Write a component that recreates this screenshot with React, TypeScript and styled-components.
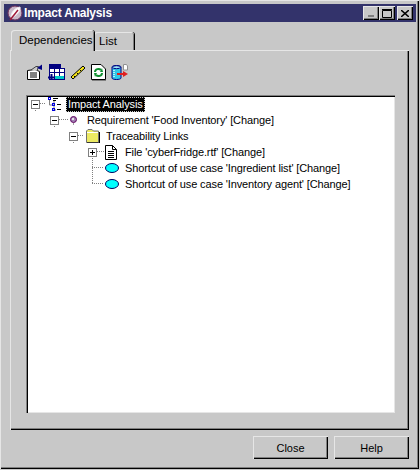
import React from 'react';
import styled, { createGlobalStyle } from 'styled-components';

const Global = createGlobalStyle`
  html, body { margin: 0; padding: 0; background: #c8c8c8; }
  * { box-sizing: border-box; }
`;

const S = {
    Window: styled.div`
    width: 419px;
    height: 469px;
    padding: 4px;
    background: #c8c8c8;
    display: flex;
    flex-direction: column;
    font-family: "Liberation Sans", Arial, sans-serif;
    font-size: 11px;
    color: #000;
    box-shadow: inset 1px 1px 0 #e6e6e6, inset -1px -1px 0 #000, inset -2px -2px 0 #808080;
  `,
    TitleBar: styled.div`
    height: 18px;
    width: 412px;
    flex: none;
    background: #33336b;
    color: #fff;
    display: flex;
    align-items: center;
    padding: 0 3px 0 3px;
    gap: 1px;
  `,
    Title: styled.span`
    font-weight: 700;
    font-size: 12px;
    letter-spacing: -0.2px;
    flex: 1;
  `,
    CaptionGroup: styled.div`
    display: flex;
    align-items: center;
  `,
    CaptionButton: styled.div<{ gap?: boolean }>`
    width: 16px;
    height: 14px;
    margin-left: ${props => (props.gap ? '2px' : '0')};
    background: #c8c8c8;
    box-shadow: inset 1px 1px 0 #e6e6e6, inset -1px -1px 0 #000, inset -2px -2px 0 #808080;
    display: flex;
    align-items: center;
    justify-content: center;
  `,
    Body: styled.div`
    flex: 1;
    padding: 6px 3px 0 6px;
    display: flex;
    flex-direction: column;
  `,
    Tabs: styled.div`
    display: flex;
    height: 22px;
    flex: none;
    padding-left: 1px;
    align-items: flex-end;
  `,
    Tab: styled.div<{ active?: boolean }>`
    height: ${props => (props.active ? '21px' : '18px')};
    width: ${props => (props.active ? '83px' : '40px')};
    margin-bottom: ${props => (props.active ? '-1px' : '0')};
    padding: ${props => (props.active ? '4px 0 0 8px' : '3px 0 0 5px')};
    background: #c8c8c8;
    border-radius: 3px 3px 0 0;
    font-size: 11.5px;
    position: relative;
    z-index: ${props => (props.active ? 1 : 0)};
    box-shadow: inset 1px 1px 0 #e6e6e6, inset -1px 0 0 #808080, 1px 0 0 #000;
  `,
    Panel: styled.div`
    width: 399px;
    height: 380px;
    flex: none;
    padding: 14px 14px 17px 16px;
    display: flex;
    flex-direction: column;
    box-shadow: inset 1px 1px 0 #e6e6e6, inset -1px -1px 0 #000, inset -2px -2px 0 #808080;
  `,
    Toolbar: styled.div`
    display: flex;
    height: 17px;
    gap: 5px;
    margin-bottom: 14px;
    flex: none;
  `,
    Tree: styled.div`
    flex: 1;
    background: #fff;
    position: relative;
    padding: 1px 0 0 2px;
    box-shadow: inset 1px 1px 0 #808080, inset 2px 2px 0 #000, inset -1px -1px 0 #e6e6e6;
  `,
    Lines: styled.svg`
    position: absolute;
    left: 0;
    top: 0;
    pointer-events: none;
  `,
    Row: styled.div<{ depth: number }>`
    height: 16px;
    display: flex;
    align-items: center;
    padding-left: ${props => 3 + props.depth * 19}px;
    position: relative;
    white-space: nowrap;
  `,
    Expander: styled.span`
    width: 9px;
    height: 9px;
    flex: none;
    margin-right: 7px;
    background: #fff;
    border: 1px solid #808080;
    display: flex;
    align-items: center;
    justify-content: center;
  `,
    Spacer: styled.span`
    width: 16px;
    flex: none;
  `,
    Glyph: styled.svg`
    flex: none;
  `,
    Label: styled.span<{ selected?: boolean }>`
    padding: 0 2px;
    height: 15px;
    line-height: 14px;
    letter-spacing: -0.12px;
    background: ${props => (props.selected ? '#000' : 'transparent')};
    color: ${props => (props.selected ? '#fff' : '#000')};
    outline: ${props => (props.selected ? '1px dotted #c8c8c8' : 'none')};
    outline-offset: -1px;
  `,
    Footer: styled.div`
    flex: 1;
    display: flex;
    justify-content: flex-end;
    align-items: flex-start;
    gap: 6px;
    padding: 6px 3px 0 0;
  `,
    Button: styled.div`
    width: 75px;
    height: 23px;
    display: flex;
    align-items: center;
    justify-content: center;
    font-size: 11px;
    box-shadow: inset 1px 1px 0 #e6e6e6, inset -1px -1px 0 #000, inset -2px -2px 0 #808080;
  `
};

const Minus = () => (
    <S.Expander>
        <svg width="5" height="5"><path d="M0 2.5H5" stroke="#000" /></svg>
    </S.Expander>
);

const Plus = () => (
    <S.Expander>
        <svg width="5" height="5"><path d="M0 2.5H5M2.5 0V5" stroke="#000" /></svg>
    </S.Expander>
);

const AppIcon = () => (
    <S.Glyph width="16" height="16" viewBox="0 0 16 16">
        <circle cx="8" cy="8" r="7" fill="#c8b8c8" stroke="#70305a" />
        <path d="M4 12C4 7 8 3 13 2C14 6 10 10 6 12Z" fill="#fff" stroke="#f0e8f0" />
        <path d="M3 15L11 5" stroke="#a01838" strokeWidth="1.5" />
    </S.Glyph>
);

const PropertiesIcon = () => (
    <svg width="17" height="17" viewBox="0 0 17 17">
        <path d="M1.5 6.5L9 5.5L13.5 7.5V15.5H1.5Z" fill="#fff" stroke="#000" />
        <path d="M4 9H11M4 11H11M4 13H11" stroke="#000" />
        <path d="M5 6L10 2.5H12.5L11 7" fill="#c8c8c8" stroke="#404040" />
        <path d="M11 4L16 0.5V6Z" fill="#000080" />
    </svg>
);

const TableIcon = () => (
    <svg width="17" height="17" viewBox="0 0 17 17">
        <rect x="1.5" y="0.5" width="11" height="3" fill="#000080" stroke="#000080" />
        <rect x="1.5" y="4.5" width="15" height="11" fill="#fff" stroke="#000080" />
        <path d="M1 8.5H16M6.5 5V15M11.5 5V15" stroke="#000080" />
        <rect x="7" y="12" width="9" height="3" fill="#00c8c8" />
        <path d="M0 13.5H7M3.5 10V16" stroke="#000080" strokeWidth="2" />
    </svg>
);

const RulerIcon = () => (
    <svg width="16" height="17" viewBox="0 0 16 17">
        <path d="M1 13L13 2L15 4L3 15Z" fill="#f8e818" stroke="#000" />
        <path d="M4 12L5 13M7 9L8 10M10 6L11 7" stroke="#000" />
    </svg>
);

const RefreshIcon = () => (
    <svg width="15" height="17" viewBox="0 0 15 17">
        <path d="M0.5 0.5H10L14.5 5V15.5H0.5Z" fill="#fff" stroke="#000" />
        <path d="M1 16.5H15" stroke="#808080" />
        <path d="M4 8C4 5 8 4 10 6M11 9C11 12 7 13 5 11" fill="none" stroke="#109030" strokeWidth="2" />
        <path d="M9 8L12 8L11 4Z M6 9L3 9L4 13Z" fill="#109030" />
    </svg>
);

const ExportIcon = () => (
    <svg width="18" height="17" viewBox="0 0 18 17">
        <path d="M12.5 0.5H15.5L16.5 2V6H12.5Z" fill="#fff" stroke="#909090" />
        <path d="M1 3C1 1 10 1 10 3V14C10 16 1 16 1 14Z" fill="#30c8e8" stroke="#000080" />
        <ellipse cx="5.5" cy="3.2" rx="4" ry="1.5" fill="#a0e8f8" stroke="#000080" />
        <path d="M3 6V14" stroke="#b0f0ff" strokeWidth="2" strokeDasharray="1 1" />
        <path d="M6 10H13" stroke="#e02020" strokeWidth="2" />
        <path d="M12 7L17 10L12 13Z" fill="#e02020" />
    </svg>
);

const HierarchyIcon = () => (
    <S.Glyph width="15" height="15" viewBox="0 0 15 15" style={{ marginRight: 4 }}>
        <path d="M2.5 3V8H5M7 3V13M7 13H9" stroke="#808080" fill="none" />
        <rect x="1.5" y="0.5" width="2" height="2" fill="none" stroke="#0000e0" />
        <rect x="5.5" y="6.5" width="2" height="2" fill="none" stroke="#0000e0" />
        <rect x="5.5" y="11.5" width="2" height="2" fill="none" stroke="#0000e0" />
        <path d="M6 1.5H11M6 3.5H9M10 7.5H14M10 12.5H14" stroke="#000" />
    </S.Glyph>
);

const ReqIcon = () => (
    <S.Glyph width="7" height="9" viewBox="0 0 7 9" style={{ margin: '0 8px 0 4px' }}>
        <circle cx="3.5" cy="3.5" r="3" fill="#a080b0" stroke="#600060" />
        <circle cx="3" cy="3" r="1" fill="#fff" />
        <path d="M3.5 7V9" stroke="#a0a0a0" />
    </S.Glyph>
);

const FolderIcon = () => (
    <S.Glyph width="15" height="14" viewBox="0 0 15 14" style={{ margin: '0 4px 0 0' }}>
        <path d="M1.5 13.5V2L3 0.5H7L8.5 2H13.5V13.5Z" fill="#ecea62" stroke="#707070" />
        <path d="M14.5 3V14H2" fill="none" stroke="#000" />
        <path d="M2 3.5H13" stroke="#fff" />
    </S.Glyph>
);

const FileIcon = () => (
    <S.Glyph width="12" height="15" viewBox="0 0 12 15" style={{ margin: '0 6px 0 1px' }}>
        <path d="M0.5 0.5H7.5L11.5 4.5V14.5H0.5Z" fill="#fff" stroke="#000" />
        <path d="M7.5 0.5V4.5H11.5M3 6.5H9M3 8.5H9M3 10.5H9M3 12.5H9" fill="none" stroke="#000" />
    </S.Glyph>
);

const UseCaseIcon = () => (
    <S.Glyph width="14" height="10" viewBox="0 0 14 10" style={{ margin: '0 4px 0 1px' }}>
        <ellipse cx="7" cy="5" rx="6.5" ry="4.5" fill="#00ffff" stroke="#000060" />
    </S.Glyph>
);

const App: React.FC = () => {
    return (
        <S.Window>
            <Global />
            <S.TitleBar>
                <AppIcon />
                <S.Title>Impact Analysis</S.Title>
                <S.CaptionGroup>
                    <S.CaptionButton>
                        <svg width="8" height="8"><path d="M1 7H7" stroke="#808080" strokeWidth="2" /></svg>
                    </S.CaptionButton>
                    <S.CaptionButton>
                        <svg width="10" height="9"><path d="M.5 1.5H9.5V8.5H.5ZM0 .5H10" fill="none" stroke="#000" /></svg>
                    </S.CaptionButton>
                    <S.CaptionButton gap>
                        <svg width="8" height="7"><path d="M0 0L8 7M8 0L0 7" stroke="#000" strokeWidth="1.5" /></svg>
                    </S.CaptionButton>
                </S.CaptionGroup>
            </S.TitleBar>
            <S.Body>
                <S.Tabs>
                    <S.Tab active>Dependencies</S.Tab>
                    <S.Tab>List</S.Tab>
                </S.Tabs>
                <S.Panel>
                    <S.Toolbar>
                        <PropertiesIcon />
                        <TableIcon />
                        <RulerIcon />
                        <RefreshIcon />
                        <ExportIcon />
                    </S.Toolbar>
                    <S.Tree>
                        <S.Lines width="200" height="100">
                            <path d="M9.5 13V17M28.5 29V33M47.5 45V49M66.5 61V88M14 8.5H20M33 24.5H43M52 40.5H57M71 56.5H78M66 72.5H78M66 88.5H78"
                                stroke="#808080" strokeDasharray="1 1" fill="none" />
                        </S.Lines>
                        <S.Row depth={0}><Minus /><HierarchyIcon /><S.Label selected>Impact Analysis</S.Label></S.Row>
                        <S.Row depth={1}><Minus /><ReqIcon /><S.Label>Requirement 'Food Inventory' [Change]</S.Label></S.Row>
                        <S.Row depth={2}><Minus /><FolderIcon /><S.Label>Traceability Links</S.Label></S.Row>
                        <S.Row depth={3}><Plus /><FileIcon /><S.Label>File 'cyberFridge.rtf' [Change]</S.Label></S.Row>
                        <S.Row depth={3}><S.Spacer /><UseCaseIcon /><S.Label>Shortcut of use case 'Ingredient list' [Change]</S.Label></S.Row>
                        <S.Row depth={3}><S.Spacer /><UseCaseIcon /><S.Label>Shortcut of use case 'Inventory agent' [Change]</S.Label></S.Row>
                    </S.Tree>
                </S.Panel>
                <S.Footer>
                    <S.Button>Close</S.Button>
                    <S.Button>Help</S.Button>
                </S.Footer>
            </S.Body>
        </S.Window>
    );
};

export default App;
